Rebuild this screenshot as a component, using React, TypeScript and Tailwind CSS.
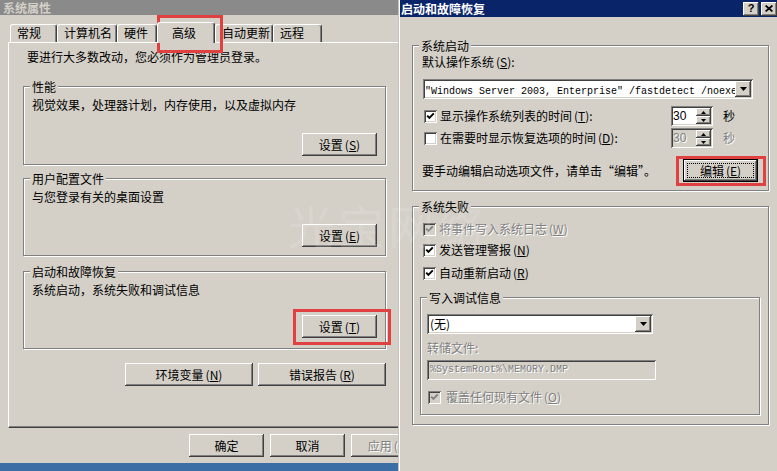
import React from "react";

const RAISED =
  "shadow-[inset_-1px_-1px_0_#404040,inset_1px_1px_0_#ffffff,inset_-2px_-2px_0_#808080,inset_2px_2px_0_#d4d0c8]";
const SUNKEN =
  "shadow-[inset_1px_1px_0_#808080,inset_-1px_-1px_0_#ffffff,inset_2px_2px_0_#404040,inset_-2px_-2px_0_#d4d0c8]";
const DIS = "text-[#808080] [text-shadow:1px_1px_0_#ffffff]";

function K({ children }: { children: React.ReactNode }) {
  return (
    <span className="ml-[2px]">
      (<span className="underline">{children}</span>)
    </span>
  );
}

function Btn({
  className = "",
  disabled = false,
  children,
}: {
  className?: string;
  disabled?: boolean;
  children: React.ReactNode;
}) {
  return (
    <div
      className={`h-[23px] shrink-0 flex items-center justify-center bg-[#d4d0c8] whitespace-nowrap ${RAISED} ${
        disabled ? DIS : "text-black"
      } ${className}`}
    >
      {children}
    </div>
  );
}

function Group({
  title,
  className = "",
  children,
}: {
  title: string;
  className?: string;
  children: React.ReactNode;
}) {
  return (
    <div
      className={`border border-[#808080] shadow-[1px_1px_0_#ffffff,inset_1px_1px_0_#ffffff] flex flex-col shrink-0 ${className}`}
    >
      <div className="-mt-[8px] ml-[6px] px-[2px] self-start bg-[#d4d0c8] h-[15px] leading-[15px] whitespace-nowrap">
        {title}
      </div>
      {children}
    </div>
  );
}

function Check({ checked = false, disabled = false }: { checked?: boolean; disabled?: boolean }) {
  return (
    <div
      className={`w-[13px] h-[13px] shrink-0 flex items-center justify-center ${
        disabled ? "bg-[#d4d0c8]" : "bg-white"
      } ${SUNKEN}`}
    >
      {checked && (
        <svg width="9" height="9" viewBox="0 0 9 9">
          <path
            d="M1.2 3.6 L3.4 5.9 L7.8 1.4"
            stroke={disabled ? "#808080" : "#000000"}
            strokeWidth="1.9"
            fill="none"
          />
        </svg>
      )}
    </div>
  );
}

function CheckRow({
  label,
  checked = false,
  disabled = false,
  className = "",
  gap = "ml-[3px]",
}: {
  label: React.ReactNode;
  checked?: boolean;
  disabled?: boolean;
  className?: string;
  gap?: string;
}) {
  return (
    <div className={`h-[16px] flex items-center ${className}`}>
      <Check checked={checked} disabled={disabled} />
      <span className={`${gap} whitespace-nowrap ${disabled ? DIS : ""}`}>{label}</span>
    </div>
  );
}

function Arrow({ up = false, w = 5, h = 3 }: { up?: boolean; w?: number; h?: number }) {
  return (
    <svg width={w} height={h} viewBox={`0 0 ${w} ${h}`}>
      <path
        d={up ? `M0 ${h} H${w} L${w / 2} 0 Z` : `M0 0 H${w} L${w / 2} ${h} Z`}
        fill="#000000"
      />
    </svg>
  );
}

function Spin({ disabled = false }: { disabled?: boolean }) {
  return (
    <div
      className={`w-[42px] h-[20px] shrink-0 flex p-[2px] ${disabled ? "bg-[#d4d0c8]" : "bg-white"} ${SUNKEN}`}
    >
      <div
        className={`flex-1 leading-[16px] font-['Liberation_Sans',sans-serif] text-[12px] ${
          disabled ? DIS : "text-black"
        }`}
      >
        30
      </div>
      <div className="w-[15px] flex flex-col">
        <div className={`flex-1 bg-[#d4d0c8] ${RAISED} flex items-center justify-center`}>
          <Arrow up />
        </div>
        <div className={`flex-1 bg-[#d4d0c8] ${RAISED} flex items-center justify-center`}>
          <Arrow />
        </div>
      </div>
    </div>
  );
}

function Combo({ className = "", children }: { className?: string; children: React.ReactNode }) {
  return (
    <div className={`h-[20px] shrink-0 bg-white flex p-[2px] ${SUNKEN} ${className}`}>
      <div className="flex-1 overflow-hidden whitespace-nowrap leading-[16px]">{children}</div>
      <div className={`w-[16px] bg-[#d4d0c8] ${RAISED} flex items-center justify-center`}>
        <Arrow w={7} h={4} />
      </div>
    </div>
  );
}

function Tab({
  label,
  className = "",
  selected = false,
}: {
  label: string;
  className?: string;
  selected?: boolean;
}) {
  const base =
    "shrink-0 border-t border-l border-white border-r border-r-[#404040] rounded-t-[3px] shadow-[inset_-1px_0_0_#808080] leading-[16px] whitespace-nowrap";
  return (
    <div
      className={`${base} ${
        selected ? "h-[21px] -mb-[1px] relative z-10 bg-[#d4d0c8] pt-[2px]" : "h-[18px] bg-[#d4d0c8]"
      } ${className}`}
    >
      {label}
    </div>
  );
}

export default function App() {
  return (
    <div className="relative w-[777px] h-[471px] overflow-hidden flex bg-[#d4d0c8] text-black text-[12px] leading-[16px] font-['Noto_Sans_CJK_SC','Noto_Sans',sans-serif]">
      {/* Left window: 系统属性 */}
      <div className="w-[398px] h-full shrink-0 flex flex-col overflow-hidden">
        <div className="h-[15px] shrink-0 bg-[#8a8a8a] text-[#d4d0c8] font-bold leading-[15px] pl-[3px]">
          系统属性
        </div>
        <div className="h-[448px] shrink-0 flex flex-col bg-[#d4d0c8]">
          <div className="mt-[7px] ml-[10px] h-[20px] shrink-0 flex items-end">
            <Tab label="常规" className="w-[47px] pl-[6px]" />
            <Tab label="计算机名" className="w-[60px] pl-[6px]" />
            <Tab label="硬件" className="w-[40px] pl-[6px]" />
            <Tab label="高级" className="w-[58px] pl-[14px]" selected />
            <Tab label="自动更新" className="w-[58px] pl-[6px]" />
            <Tab label="远程" className="w-[49px] pl-[6px]" />
          </div>
          <div className="ml-[8px] w-[440px] h-[386px] shrink-0 border-t border-l border-white border-b border-b-[#404040] shadow-[inset_0_-1px_0_#808080] flex flex-col">
            <div className="mt-[6px] ml-[18px]">要进行大多数改动，您必须作为管理员登录。</div>

            <Group title="性能" className="ml-[14px] w-[363px] mt-[21px]">
              <div className="pt-[3px] pl-[8px]">视觉效果，处理器计划，内存使用，以及虚拟内存</div>
              <div className="mt-[20px] pb-[8px] pr-[8px] flex justify-end">
                <Btn className="w-[75px]">
                  设置<K>S</K>
                </Btn>
              </div>
            </Group>

            <Group title="用户配置文件" className="ml-[14px] w-[363px] mt-[13px]">
              <div className="pt-[3px] pl-[8px]">与您登录有关的桌面设置</div>
              <div className="mt-[19px] pb-[8px] pr-[8px] flex justify-end">
                <Btn className="w-[75px]">
                  设置<K>E</K>
                </Btn>
              </div>
            </Group>

            <Group title="启动和故障恢复" className="ml-[14px] w-[363px] mt-[15px]">
              <div className="pt-[3px] pl-[8px]">系统启动，系统失败和调试信息</div>
              <div className="mt-[17px] pb-[10px] pr-[8px] flex justify-end">
                <Btn className="w-[75px]">
                  设置<K>T</K>
                </Btn>
              </div>
            </Group>

            <div className="mt-[14px] ml-[116px] flex gap-[5px]">
              <Btn className="w-[128px]">
                环境变量<K>N</K>
              </Btn>
              <Btn className="w-[128px]">
                错误报告<K>R</K>
              </Btn>
            </div>
          </div>

          <div className="mt-[6px] ml-[189px] flex gap-[6px]">
            <Btn className="w-[75px]">确定</Btn>
            <Btn className="w-[75px]">取消</Btn>
            <Btn className="w-[75px]" disabled>
              应用<K>A</K>
            </Btn>
          </div>
        </div>
        <div className="h-[8px] shrink-0 bg-[#3a6ea5]" />
      </div>

      {/* Right window: 启动和故障恢复 */}
      <div className="flex-1 h-full bg-[#d4d0c8] shadow-[inset_1px_0_0_#c8c4bc,inset_2px_0_0_#ffffff] flex flex-col">
        <div className="ml-[2px] h-[17px] shrink-0 bg-[#0a246a] flex items-center justify-between">
          <span className="pl-[1px] text-white font-bold leading-[17px]">启动和故障恢复</span>
          <div className="flex gap-[2px]">
            <div
              className={`w-[16px] h-[14px] bg-[#d4d0c8] ${RAISED} flex items-center justify-center font-bold text-[11px] leading-none font-['Liberation_Sans',sans-serif]`}
            >
              ?
            </div>
            <div className={`w-[16px] h-[14px] bg-[#d4d0c8] ${RAISED} flex items-center justify-center`}>
              <svg width="8" height="7" viewBox="0 0 8 7">
                <path d="M0.6 0.5 L7.4 6.5 M7.4 0.5 L0.6 6.5" stroke="#000000" strokeWidth="1.7" />
              </svg>
            </div>
          </div>
        </div>

        <Group title="系统启动" className="ml-[14px] w-[357px] mt-[28px]">
          <div className="pl-[9px] pr-[10px] pt-[1px] pb-[8px] flex flex-col">
            <div>
              默认操作系统<K>S</K>:
            </div>
            <Combo className="mt-[9px] ml-[1px] w-[330px]">
              <span className="font-['Liberation_Mono',monospace] text-[10px]">
                {'"Windows Server 2003, Enterprise" /fastdetect /noexecute=optout'}
              </span>
            </Combo>
            <div className="mt-[7px] h-[20px] flex items-center">
              <div className="ml-[2px]">
                <Check checked />
              </div>
              <span className="ml-[3px] flex-1 whitespace-nowrap">
                显示操作系统列表的时间<K>T</K>:
              </span>
              <Spin />
              <span className="ml-[10px] mr-[23px]">秒</span>
            </div>
            <div className="mt-[2px] h-[20px] flex items-center">
              <div className="ml-[2px]">
                <Check />
              </div>
              <span className="ml-[3px] flex-1 whitespace-nowrap">
                在需要时显示恢复选项的时间<K>D</K>:
              </span>
              <Spin disabled />
              <span className={`ml-[10px] mr-[23px] ${DIS}`}>秒</span>
            </div>
            <div className="mt-[11px] flex items-center justify-between">
              <span className="whitespace-nowrap">要手动编辑启动选项文件，请单击“编辑”。</span>
              <div className="w-[75px] h-[23px] border border-black flex">
                <div className={`flex-1 bg-[#d4d0c8] ${RAISED} p-[3px] flex`}>
                  <div className="flex-1 border border-dotted border-black flex items-center justify-center whitespace-nowrap">
                    编辑<K>E</K>
                  </div>
                </div>
              </div>
            </div>
          </div>
        </Group>

        <Group title="系统失败" className="ml-[14px] w-[357px] mt-[15px]">
          <div className="pl-[7px] pt-[7px] pb-[9px] flex flex-col">
            <CheckRow
              className="ml-[3px]"
              checked
              disabled
              label={
                <>
                  将事件写入系统日志<K>W</K>
                </>
              }
            />
            <CheckRow
              className="ml-[3px] mt-[5px]"
              checked
              label={
                <>
                  发送管理警报<K>N</K>
                </>
              }
            />
            <CheckRow
              className="ml-[3px] mt-[7px]"
              checked
              label={
                <>
                  自动重新启动<K>R</K>
                </>
              }
            />
            <Group title="写入调试信息" className="mt-[16px] w-[340px]">
              <div className="pl-[6px] pt-[9px] pb-[9px] flex flex-col">
                <Combo className="w-[226px]">
                  <span className="pl-[1px]">(无)</span>
                </Combo>
                <div className={`mt-[6px] ${DIS}`}>转储文件:</div>
                <div className={`mt-[4px] w-[229px] h-[20px] bg-[#d4d0c8] ${SUNKEN} px-[3px] flex items-center`}>
                  <span className={`font-['Liberation_Mono',monospace] text-[10px] ${DIS}`}>
                    {"%SystemRoot%\\MEMORY.DMP"}
                  </span>
                </div>
                <CheckRow
                  className="mt-[9px] ml-[1px]"
                  gap="ml-[5px]"
                  checked
                  disabled
                  label={
                    <>
                      覆盖任何现有文件<K>O</K>
                    </>
                  }
                />
              </div>
            </Group>
          </div>
        </Group>
      </div>

      {/* Watermark overlay */}
      <div className="absolute left-[288px] top-[196px] text-[46px] leading-[56px] tracking-[4px] text-white/15 pointer-events-none whitespace-nowrap">
        光宝网络
      </div>

      {/* Red highlight boxes */}
      <div className="absolute left-[157px] top-[15px] w-[66px] h-[38px] border-[3px] border-[#e0403f] pointer-events-none" />
      <div className="absolute left-[293px] top-[309px] w-[98px] h-[36px] border-[3px] border-[#e0403f] pointer-events-none" />
      <div className="absolute left-[676px] top-[156px] w-[90px] h-[30px] border-[3px] border-[#e0403f] pointer-events-none" />
    </div>
  );
}
